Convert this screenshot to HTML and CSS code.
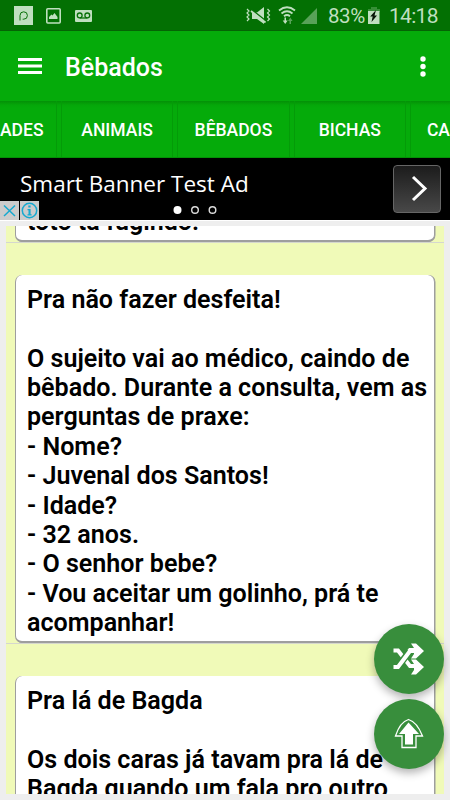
FILE: index.html
```html
<!DOCTYPE html>
<html lang="pt-BR">
<head>
<meta charset="utf-8">
<title>Bêbados</title>
<link rel="stylesheet" href="styles.css">
</head>
<body>
<div class="app">
  <header class="status">
    <svg class="status-left" width="100" height="31" viewBox="0 0 100 31">
      <path fill="#bfdfbf" d="M14 6h19v19H14z"/>
      <path d="M20 20.500v-5a3.700 3.700 0 1 1 3.700 3.700h-1" fill="none" stroke="#087008" stroke-width="1"/>
      <rect x="46.800" y="8.800" width="13.400" height="14.200" rx="1" fill="none" stroke="#bfdfbf" stroke-width="1.600"/>
      <path fill="#bfdfbf" d="M49 19v-2l2.500-2.500 1 1 2-2.500 3 4V19z"/>
      <rect x="75" y="10" width="17" height="12" rx="1" fill="#bfdfbf"/>
      <g fill="none" stroke="#087008" stroke-width="1.300"><circle cx="79.700" cy="15.400" r="2.400"/><circle cx="87.300" cy="15.400" r="2.400"/><path d="M79.700 18h7.600"/></g>
    </svg>
    <div class="status-right">
      <svg width="74" height="31" viewBox="245 0 74 31">
        <g fill="none" stroke="#bfdfbf" stroke-width="1.200"><path d="M247 9l2 2-2 2 2 2-2 2 2 2-2 2M267.500 9l2 2-2 2 2 2-2 2 2 2-2 2"/></g>
        <path fill="#bfdfbf" d="M252 12.500h5l7-5.500v17l-7-5h-5z"/>
        <path d="M251.500 9.500l14 11" stroke="#087008" stroke-width="1.500"/>
        <path d="M251 11l14.500 11.500" stroke="#bfdfbf" stroke-width="1.800"/>
        <g fill="none" stroke="#bfdfbf" stroke-width="1.800"><path d="M279 10.500q8-6.500 16 0M281.500 13.500q5.500-4.500 11 0M284 16.200q3-2.500 6 0"/></g>
        <path fill="#bfdfbf" d="M284.500 17.500h1.500v3h1.700l-2.500 3.500-2.500-3.500h1.800z"/>
        <path fill="#58a258" d="M289.500 24v-3H288l2.300-3.500 2.300 3.500H291v3zM301 24L317 8v16z"/>
      </svg>
      <span class="percent">83%</span>
      <svg class="battery" width="12" height="31" viewBox="0 0 12 31">
        <path fill="#368f36" d="M3 7h6v2h3v3H0V9h3z"/><path fill="#bfdfbf" d="M0 11h11.500v13H0z"/><path fill="#061506" d="M8 10L2.200 16.500h2.500L3.500 22 9 15.500H6.500z"/>
      </svg>
      <span class="clock">14:18</span>
    </div>
  </header>
  <div class="toolbar">
    <svg width="24" height="17" viewBox="0 0 24 17"><path fill="#fff" d="M0 0h24v3H0zM0 6.500h24v3H0zM0 13h24v3H0z"/></svg>
    <h1>Bêbados</h1>
    <svg width="6" height="22" viewBox="0 0 6 22"><g fill="#fff"><circle cx="3" cy="3" r="2.700"/><circle cx="3" cy="10.500" r="2.700"/><circle cx="3" cy="18" r="2.700"/></g></svg>
  </div>
  <nav class="tabs">
    <div class="tab tab-first">ADES</div>
    <div class="tab">ANIMAIS</div>
    <div class="tab">BÊBADOS</div>
    <div class="tab">BICHAS</div>
    <div class="tab tab-last">CA</div>
  </nav>
  <section class="banner">
    <span class="ad-title">Smart Banner Test Ad</span>
    <div class="ad-next"><svg width="46" height="46" viewBox="0 0 46 46"><path d="M19 11l12 11.500L19 34" fill="none" stroke="#fff" stroke-width="3"/></svg></div>
    <svg class="ad-choices" width="39" height="19" viewBox="0 0 39 19">
      <path fill="#ccc" d="M0 0h19v19H0zM20 0h19v19H20z"/>
      <g fill="none" stroke="#16a9d0" stroke-width="1.500"><path d="M4 4.500l11 10.500M15 4.500L4 15"/><circle cx="29.500" cy="9.500" r="7.200"/></g>
      <path fill="#16a9d0" d="M28.300 4.500h2.300v2h-2.300zM27.500 8h3.100v5.200h1v1.300h-4.100v-1.300h1V9.300h-1z"/>
    </svg>
    <svg class="ad-dots" width="46" height="10" viewBox="0 0 46 10"><circle cx="5.500" cy="5" r="4" fill="#fff"/><g fill="none" stroke="#ddd" stroke-width="1.400"><circle cx="23" cy="5" r="3.300"/><circle cx="40.500" cy="5" r="3.300"/></g></svg>
  </section>
  <main class="content">
    <div class="list">
      <div class="item item-previous"><article class="card"><p>totó tá fugindo!</p></article></div>
      <div class="item"><article class="card">
        <p>Pra não fazer desfeita!</p>
        <p><br></p>
        <p>O sujeito vai ao médico, caindo de</p>
        <p>bêbado. Durante a consulta, vem as</p>
        <p>perguntas de praxe:</p>
        <p>- Nome?</p>
        <p>- Juvenal dos Santos!</p>
        <p>- Idade?</p>
        <p>- 32 anos.</p>
        <p>- O senhor bebe?</p>
        <p>- Vou aceitar um golinho, prá te</p>
        <p>acompanhar!</p>
      </article></div>
      <div class="item"><article class="card">
        <p>Pra lá de Bagda</p>
        <p><br></p>
        <p>Os dois caras já tavam pra lá de</p>
        <p>Bagda quando um fala pro outro</p>
      </article></div>
    </div>
  </main>
  <div class="fabs">
    <div class="fab"><svg width="70" height="70" viewBox="0 0 70 70">
      <path d="M19.500 26.500H24L36 42h6M32 31l4-5h6" fill="none" stroke="#fff" stroke-width="4"/>
      <path fill="#fff" d="M37 19.500h5l8 7.500-8 7.500h-5l3-4.500v-6zM37 35.500h5l8 7.500-8 7.500h-5l3-4.500v-6z"/>
      <path d="M26 40L35.500 27.500" stroke="#388e3c" stroke-width="7"/>
      <path d="M19.500 43H24L36 27h5" fill="none" stroke="#fff" stroke-width="4"/>
    </svg></div>
    <div class="fab"><svg width="70" height="70" viewBox="0 0 70 70">
      <path d="M34.500 20.500Q43 23 48.500 37H42v11.500H28V37h-6.500Q26 23 34.500 20.500z" fill="none" stroke="#fff" stroke-width="1.300"/>
      <path fill="#fff" d="M34.500 23.500L45 35h-6v10.500h-8V35h-6z"/>
    </svg></div>
  </div>
</div>
</body>
</html>
```
FILE: styles.css
```css
* { box-sizing: border-box; }
body { margin: 0; font-family: Roboto, sans-serif; background: #eee; }
svg { display: block; flex: none; }
.app { position: relative; width: 450px; height: 800px; overflow: hidden; display: flex; flex-direction: column; }
.status { height: 31px; flex: none; display: flex; justify-content: space-between; background: #037003; border-bottom: 1px solid #056405; color: #bfdfbf; }
.status-right { display: flex; padding-right: 13px; font-size: 21px; line-height: 33px; }
.percent { width: 36px; margin-left: 9px; font-size: 20.500px; letter-spacing: -.4px; }
.battery { margin-left: 4px; }
.clock { width: 48px; margin-left: 9px; letter-spacing: -.7px; white-space: nowrap; }
.toolbar { height: 70px; flex: none; display: flex; align-items: center; padding: 1px 24px 0 18px; background: #05ab0a; color: #fff; }
.toolbar h1 { flex: 1; margin: 2px 0 0 23px; font-size: 25px; line-height: 30px; font-weight: 500; }
.tabs { height: 57px; flex: none; display: flex; gap: 4px; background: linear-gradient(#049007, #05a709 4px, #05ab0a 7px); border-bottom: 1px solid #049007; color: #fff; overflow: hidden; font-size: 17.500px; font-weight: 500; }
.tab { width: 112.300px; flex: none; display: flex; align-items: center; justify-content: center; padding-top: 2px; border: solid #049b08; border-width: 0 1px; }
.tab-first { width: 57px; justify-content: flex-start; border-left: 0; }
.tab-last { justify-content: flex-start; padding-left: 16px; }
.banner { position: relative; height: 62px; flex: none; display: flex; justify-content: space-between; background: #000; color: #fff; padding: 7px 9px 0 20px; }
.ad-title { font: 22.500px/37px "Open Sans", sans-serif; }
.ad-next { width: 48px; height: 48px; border: 1px solid #666; border-radius: 4px; background: linear-gradient(#1c1c1c, #484848); }
.ad-choices { position: absolute; left: 0; bottom: 0; }
.ad-dots { position: absolute; left: 172px; bottom: 5px; }
.content { flex: 1; min-height: 0; padding: 5px 6px 6px; border-top: 1px solid #fff; }
.list { width: 438px; height: 568px; overflow: hidden; background: #f0fab8; }
.item { padding: 32px 9px 0; border-bottom: 1px solid #d5d7ce; }
.card { height: 368px; padding: 10px 0 0 11px; border: solid #9e9e9e; border-width: 0 1px 2px 1px; border-radius: 7px; background: #fff; box-shadow: .5px 0 0 #9e9e9e; font-size: 25.080px; font-weight: 600; line-height: 29.360px; white-space: nowrap; }
.card p { margin: 0; }
.item-previous { padding-top: 0; }
.item-previous .card { height: 16px; padding: 0 0 0 11px; border-radius: 0 0 7px 7px; overflow: hidden; }
.item-previous p { margin-top: -19px; }
.fabs { position: absolute; right: 6.500px; top: 624px; display: grid; gap: 5px; }
.fab { width: 70px; height: 70px; border-radius: 50%; background: #388e3c; box-shadow: 0 4px 8px rgba(0,0,0,.3); }
```
